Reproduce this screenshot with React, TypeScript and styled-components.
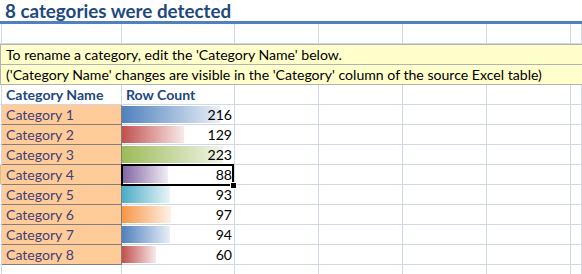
import styled, { createGlobalStyle } from "styled-components";

const GlobalStyle = createGlobalStyle`
  html, body {
    margin: 0;
    padding: 0;
    background: #ffffff;
  }
  body {
    font-family: "Lato", "Liberation Sans", sans-serif;
    font-size: 14.1px;
    color: #000000;
    overflow: hidden;
  }
`;

const GRID = "#d0d7e5";

const Sheet = styled.div`
  display: flex;
  flex-direction: column;
  width: 582px;
  height: 274px;
  overflow: hidden;
`;

const TitleRow = styled.div`
  display: flex;
  align-items: flex-end;
  height: 21px;
  padding-left: 5px;
  border-bottom: 3px solid #4f81bd;
  color: #1f497d;
  font-size: 18.8px;
  font-weight: 700;
  line-height: 21px;
`;

const Row = styled.div`
  display: flex;
  height: 19px;
  border-bottom: 1px solid ${GRID};
  flex-shrink: 0;
`;

const RowEdge = styled.div<{ $active?: boolean }>`
  width: 1px;
  flex-shrink: 0;
  background: ${(p) => (p.$active ? "#f9b84a" : "#ffffff")};
  border-right: 1px solid ${GRID};
`;

const Cell = styled.div<{ $w?: number }>`
  position: relative;
  display: flex;
  align-items: flex-end;
  box-sizing: border-box;
  width: ${(p) => (p.$w ? `${p.$w}px` : "auto")};
  flex: ${(p) => (p.$w ? "0 0 auto" : "1 1 auto")};
  height: calc(100% + 1px);
  margin-bottom: -1px;
  border-right: 1px solid ${GRID};
  border-bottom: 1px solid ${GRID};
  line-height: 19px;
  white-space: nowrap;
`;

const HeaderCell = styled(Cell)`
  padding-left: 4px;
  color: #1f497d;
  font-weight: 700;
`;

const InputCell = styled(Cell)`
  padding-left: 4px;
  background: #ffcc99;
  color: #3f3f76;
  border-right-color: #7f7f7f;
  border-bottom-color: #7f7f7f;
`;

const NoteBlock = styled.div`
  display: flex;
  flex-direction: column;
  border-top: 1px solid #b2b2b2;
`;

const NoteRow = styled.div`
  display: flex;
  align-items: flex-end;
  height: 19px;
  padding-left: 5px;
  background: #ffffcc;
  border-bottom: 1px solid #b2b2b2;
  border-left: 1px solid #b2b2b2;
  line-height: 19px;
  white-space: nowrap;
`;

const CountCell = styled(Cell)`
  justify-content: flex-end;
  padding-right: 2px;
`;

const Bar = styled.div<{ $color: string; $fade: string }>`
  position: absolute;
  left: 0;
  top: 1px;
  bottom: 1px;
  background: linear-gradient(to right, ${(p) => p.$color}, ${(p) => p.$fade});
`;

const Count = styled.span`
  position: relative;
`;

const Selection = styled.div`
  position: absolute;
  z-index: 5;
  left: -1px;
  top: -1px;
  width: 113px;
  height: 22px;
  box-sizing: border-box;
  border: 2px solid #000000;
  pointer-events: none;
`;

const FillHandle = styled.div`
  position: absolute;
  right: -4px;
  bottom: -4px;
  width: 5px;
  height: 5px;
  background: #000000;
  outline: 1px solid #ffffff;
`;

const categories = [
  { name: "Category 1", count: 216, color: "#4f81bd", fade: "#e9eff7" },
  { name: "Category 2", count: 129, color: "#c0504d", fade: "#f8eaea" },
  { name: "Category 3", count: 223, color: "#9bbb59", fade: "#f1f5e8" },
  { name: "Category 4", count: 88, color: "#8064a2", fade: "#f0edf5" },
  { name: "Category 5", count: 93, color: "#4bacc6", fade: "#e9f5f8" },
  { name: "Category 6", count: 97, color: "#f79646", fade: "#fef2e8" },
  { name: "Category 7", count: 94, color: "#4f81bd", fade: "#e9eff7" },
  { name: "Category 8", count: 60, color: "#c0504d", fade: "#f8eaea" },
];

const SELECTED = 3;
const COLS = [120, 113, 84, 84, 84, 84];

const minCount = Math.min(...categories.map((c) => c.count));
const maxCount = Math.max(...categories.map((c) => c.count));

// Excel 2007 style bars: shortest bar 34px, longest 101px
const barWidth = (v: number) =>
  Math.round(34 + ((v - minCount) / (maxCount - minCount)) * 67);

const EmptyCells = ({ from }: { from: number }) => (
  <>
    {COLS.slice(from).map((w, i) => (
      <Cell key={i} $w={w} />
    ))}
    <Cell />
  </>
);

export default function App() {
  return (
    <>
      <GlobalStyle />
      <Sheet>
        <TitleRow>8 categories were detected</TitleRow>
        <Row>
          <RowEdge />
          <EmptyCells from={0} />
        </Row>
        <NoteBlock>
          <NoteRow>To rename a category, edit the 'Category Name' below.</NoteRow>
          <NoteRow>
            ('Category Name' changes are visible in the 'Category' column of the
            source Excel table)
          </NoteRow>
        </NoteBlock>
        <Row>
          <RowEdge />
          <HeaderCell $w={COLS[0]}>Category Name</HeaderCell>
          <HeaderCell $w={COLS[1]}>Row Count</HeaderCell>
          <EmptyCells from={2} />
        </Row>
        {categories.map((c, i) => (
          <Row key={c.name}>
            <RowEdge $active={i === SELECTED} />
            <InputCell $w={COLS[0]}>{c.name}</InputCell>
            <CountCell $w={COLS[1]}>
              <Bar
                $color={c.color}
                $fade={c.fade}
                style={{ width: barWidth(c.count) }}
              />
              <Count>{c.count}</Count>
              {i === SELECTED && (
                <Selection>
                  <FillHandle />
                </Selection>
              )}
            </CountCell>
            <EmptyCells from={2} />
          </Row>
        ))}
        <Row>
          <RowEdge />
          <EmptyCells from={0} />
        </Row>
      </Sheet>
    </>
  );
}
